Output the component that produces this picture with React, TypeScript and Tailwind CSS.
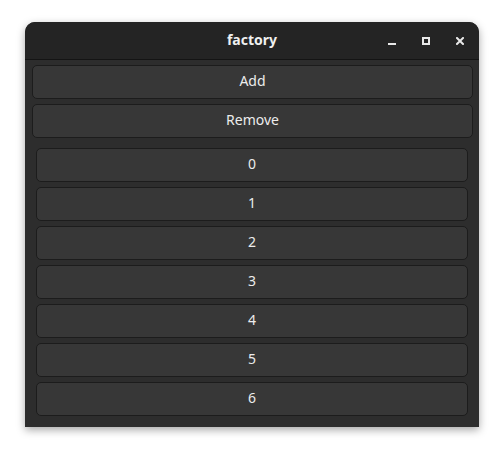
import React from "react";

const font = { fontFamily: '"Noto Sans", "DejaVu Sans", sans-serif' };

function Btn({ label }: { label: string }) {
  return (
    <div className="h-[34px] rounded-[5px] border border-[#1c1c1c] bg-[#373737] flex items-center justify-center pb-[3px] text-[14px] text-[#ececec]">
      {label}
    </div>
  );
}

export default function App() {
  const items = [0, 1, 2, 3, 4, 5, 6];
  return (
    <div className="w-[504px] h-[455px] bg-white pt-[22px] pl-[25px]" style={font}>
      <div className="w-[454px] rounded-t-[10px] bg-[#2d2d2d] shadow-[0_3px_9px_rgba(0,0,0,0.35)] overflow-hidden">
        <div className="h-[38px] bg-[#242424] border-b border-[#141414] grid grid-cols-[1fr_auto_1fr] items-center">
          <div />
          <div className="text-[14px] font-bold text-[#f0f0f0] pb-[2px]">factory</div>
          <div className="flex justify-end items-center gap-[10px] pr-[7px]">
            <div className="w-[24px] h-[24px] flex items-center justify-center">
              <div className="w-[8px] h-[2px] bg-[#e8e8e8] mt-[6px]" />
            </div>
            <div className="w-[24px] h-[24px] flex items-center justify-center">
              <div className="w-[8px] h-[8px] border-2 border-[#e8e8e8]" />
            </div>
            <div className="w-[24px] h-[24px] flex items-center justify-center">
              <svg width="8" height="8" viewBox="0 0 8 8">
                <path d="M1 1 L7 7 M7 1 L1 7" stroke="#e8e8e8" strokeWidth="2" strokeLinecap="square" />
              </svg>
            </div>
          </div>
        </div>
        <div className="pt-[5px] pb-[11px]">
          <div className="pl-[7px] pr-[6px] flex flex-col gap-[5px]">
            <Btn label="Add" />
            <Btn label="Remove" />
          </div>
          <div className="mt-[10px] px-[11px] flex flex-col gap-[5px]">
            {items.map((i) => (
              <Btn key={i} label={String(i)} />
            ))}
          </div>
        </div>
      </div>
    </div>
  );
}
